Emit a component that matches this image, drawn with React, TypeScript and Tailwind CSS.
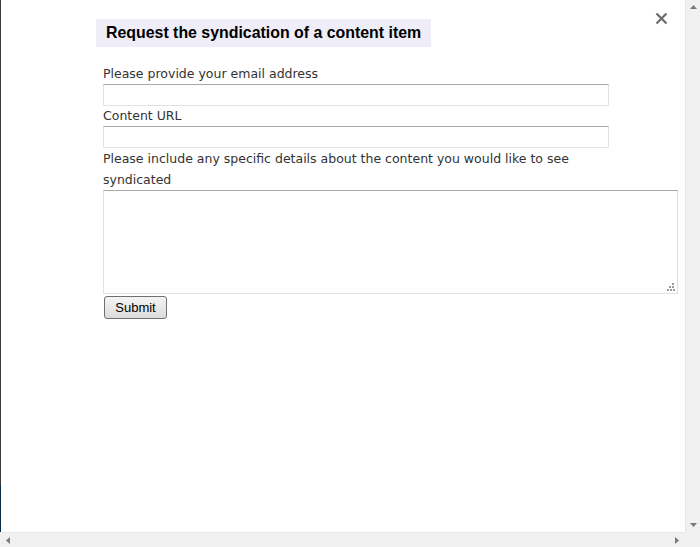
export default function App() {
  return (
    <div className="flex h-[547px] w-[700px] flex-col overflow-hidden bg-white">
      <div className="flex min-h-0 flex-1">
        {/* left edge of the page behind the dialog */}
        <div className="flex w-px flex-col">
          <div className="h-[485px] bg-[#3a3a3a]" />
          <div className="flex-1 bg-[#0d2a45]" />
        </div>

        <div className="relative flex-1 pl-[95px] pt-[19px]">
          <button className="absolute right-[17px] top-[12px]">
            <svg width="13" height="13" viewBox="0 0 13 13">
              <path d="M1.5 1.5 L11.5 11.5 M11.5 1.5 L1.5 11.5" stroke="#6b6b6b" strokeWidth="2.2" />
            </svg>
          </button>

          <h1
            className="w-fit bg-[#efeef8] px-[10px] py-[4px] text-[15.9px] font-bold leading-[20px] text-black"
            style={{ fontFamily: '"Liberation Sans", Arial, sans-serif' }}
          >
            Request the syndication of a content item
          </h1>

          <form
            className="mt-[17px] w-[513px] pl-[7px] text-[12.5px] text-[#333]"
            style={{ fontFamily: '"DejaVu Sans", Verdana, sans-serif' }}
          >
            <label className="block leading-[20px]">Please provide your email address</label>
            <input className="block h-[22px] w-[506px] border border-[#e3e3e3] border-t-[#a8a8a8] bg-white" />
            <label className="block leading-[20px]">Content URL</label>
            <input className="block h-[22px] w-[506px] border border-[#e3e3e3] border-t-[#a8a8a8] bg-white" />
            <label className="block leading-[21px]">
              Please include any specific details about the content you would like to see syndicated
            </label>
            <div className="relative h-[104px] w-[575px] border border-[#e3e3e3] border-t-[#a8a8a8] border-r-[#dcdcdc] bg-white">
              <svg className="absolute bottom-[2px] right-[2px]" width="8" height="8" viewBox="0 0 8 8">
                <rect x="5" y="0" width="2" height="2" fill="#9a9a9a" />
                <rect x="2" y="3" width="2" height="2" fill="#9a9a9a" />
                <rect x="5" y="3" width="2" height="2" fill="#9a9a9a" />
                <rect x="0" y="6" width="2" height="2" fill="#9a9a9a" />
                <rect x="3" y="6" width="2" height="2" fill="#9a9a9a" />
                <rect x="6" y="6" width="2" height="2" fill="#9a9a9a" />
              </svg>
            </div>
            <button
              type="button"
              className="ml-px mt-[2px] block h-[23px] w-[63px] rounded-[3px] border border-[#707070] bg-gradient-to-b from-[#f4f4f4] to-[#dcdcdc] text-[13px] leading-none text-black"
              style={{ fontFamily: '"Liberation Sans", Arial, sans-serif' }}
            >
              Submit
            </button>
          </form>
        </div>

        {/* vertical scrollbar */}
        <div className="flex w-[15px] flex-col items-center justify-between border-l border-[#e6e6e6] bg-[#f0f0f0] py-[5px]">
          <svg width="7" height="4" viewBox="0 0 7 4">
            <path d="M0 4 L3.5 0 L7 4 Z" fill="#7a7a7a" />
          </svg>
          <svg width="7" height="4" viewBox="0 0 7 4">
            <path d="M0 0 L3.5 4 L7 0 Z" fill="#7a7a7a" />
          </svg>
        </div>
      </div>

      {/* horizontal scrollbar */}
      <div className="flex h-[15px]">
        <div className="flex flex-1 items-center justify-between border-t border-[#e6e6e6] bg-[#f0f0f0] px-[6px]">
          <svg width="4" height="7" viewBox="0 0 4 7">
            <path d="M4 0 L0 3.5 L4 7 Z" fill="#7a7a7a" />
          </svg>
          <svg width="4" height="7" viewBox="0 0 4 7">
            <path d="M0 0 L4 3.5 L0 7 Z" fill="#7a7a7a" />
          </svg>
        </div>
        <div className="w-[15px] bg-[#f0f0f0]" />
      </div>
    </div>
  );
}
